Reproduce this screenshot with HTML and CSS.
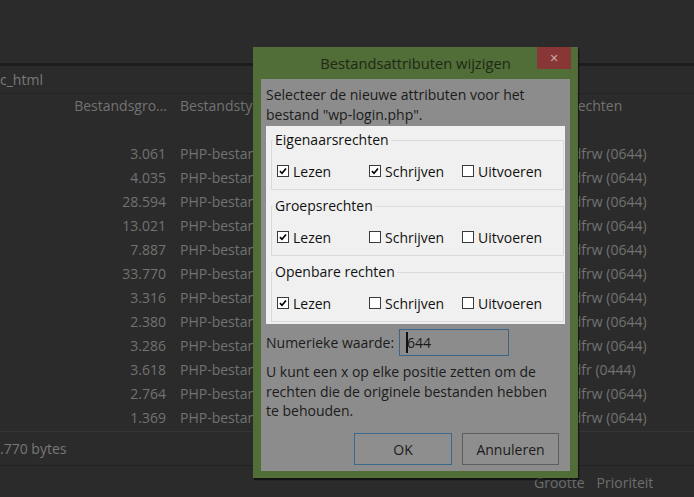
FILE: index.html
```html
<!DOCTYPE html>
<html lang="nl">
<head>
<meta charset="utf-8">
<title>Bestandsattributen wijzigen</title>
<link rel="stylesheet" href="styles.css">
</head>
<body>
<div class="app">
  <div class="toolbar"></div>
  <div class="sep"></div>
  <div class="path">c_html</div>
  <div class="list">
    <div class="row head"><span class="c-size">Bestandsgro…</span><span class="c-type">Bestandstype</span><span class="c-rights">Rechten</span></div>
    <div class="row"><span class="c-size"></span><span class="c-type"></span><span class="c-rights"></span></div>
    <div class="row"><span class="c-size">3.061</span><span class="c-type">PHP-bestand</span><span class="c-rights">adfrw (0644)</span></div>
    <div class="row"><span class="c-size">4.035</span><span class="c-type">PHP-bestand</span><span class="c-rights">adfrw (0644)</span></div>
    <div class="row"><span class="c-size">28.594</span><span class="c-type">PHP-bestand</span><span class="c-rights">adfrw (0644)</span></div>
    <div class="row"><span class="c-size">13.021</span><span class="c-type">PHP-bestand</span><span class="c-rights">adfrw (0644)</span></div>
    <div class="row"><span class="c-size">7.887</span><span class="c-type">PHP-bestand</span><span class="c-rights">adfrw (0644)</span></div>
    <div class="row"><span class="c-size">33.770</span><span class="c-type">PHP-bestand</span><span class="c-rights">adfrw (0644)</span></div>
    <div class="row"><span class="c-size">3.316</span><span class="c-type">PHP-bestand</span><span class="c-rights">adfrw (0644)</span></div>
    <div class="row"><span class="c-size">2.380</span><span class="c-type">PHP-bestand</span><span class="c-rights">adfrw (0644)</span></div>
    <div class="row"><span class="c-size">3.286</span><span class="c-type">PHP-bestand</span><span class="c-rights">adfrw (0644)</span></div>
    <div class="row"><span class="c-size">3.618</span><span class="c-type">PHP-bestand</span><span class="c-rights">adfr (0444)</span></div>
    <div class="row"><span class="c-size">2.764</span><span class="c-type">PHP-bestand</span><span class="c-rights">adfrw (0644)</span></div>
    <div class="row"><span class="c-size">1.369</span><span class="c-type">PHP-bestand</span><span class="c-rights">adfrw (0644)</span></div>
  </div>
  <div class="total">.770 bytes</div>
  <div class="queue-head"><span class="q-size">Grootte</span><span class="q-prio">Prioriteit</span></div>
</div>

<div class="dialog">
  <div class="titlebar">
    <span></span>
    <span class="title">Bestandsattributen wijzigen</span>
    <span class="close-wrap"><span class="close">&#x2715;</span></span>
  </div>
  <div class="body">
    <p class="intro">Selecteer de nieuwe attributen voor het bestand "wp-login.php".</p>
    <div class="groups">
      <div class="group">
        <div class="legend">Eigenaarsrechten</div>
        <div class="checks">
          <label class="check"><span class="box on"><svg viewBox="0 0 12 12"><path d="M2.3 6.2 L4.8 8.7 L9.6 2.9"/></svg></span>Lezen</label>
          <label class="check"><span class="box on"><svg viewBox="0 0 12 12"><path d="M2.3 6.2 L4.8 8.7 L9.6 2.9"/></svg></span>Schrijven</label>
          <label class="check"><span class="box"></span>Uitvoeren</label>
        </div>
      </div>
      <div class="group">
        <div class="legend">Groepsrechten</div>
        <div class="checks">
          <label class="check"><span class="box on"><svg viewBox="0 0 12 12"><path d="M2.3 6.2 L4.8 8.7 L9.6 2.9"/></svg></span>Lezen</label>
          <label class="check"><span class="box"></span>Schrijven</label>
          <label class="check"><span class="box"></span>Uitvoeren</label>
        </div>
      </div>
      <div class="group">
        <div class="legend">Openbare rechten</div>
        <div class="checks">
          <label class="check"><span class="box on"><svg viewBox="0 0 12 12"><path d="M2.3 6.2 L4.8 8.7 L9.6 2.9"/></svg></span>Lezen</label>
          <label class="check"><span class="box"></span>Schrijven</label>
          <label class="check"><span class="box"></span>Uitvoeren</label>
        </div>
      </div>
    </div>
    <div class="numeric">
      <span class="num-label">Numerieke waarde:</span>
      <span class="num-input"><span class="caret"></span>644</span>
    </div>
    <p class="help">U kunt een x op elke positie zetten om de rechten die de originele bestanden hebben te behouden.</p>
    <div class="buttons">
      <span class="btn btn-ok">OK</span>
      <span class="btn btn-cancel">Annuleren</span>
    </div>
  </div>
</div>
</body>
</html>
```

FILE: styles.css
```css
html, body {
  margin: 0;
  padding: 0;
}
body {
  width: 694px;
  height: 497px;
  overflow: hidden;
  background: #2b2b2b;
  font-family: "Open Sans", "Noto Sans", sans-serif;
  font-size: 14px;
  position: relative;
}

/* ---------- background application (dimmed) ---------- */
.app {
  color: #727272;
}
.toolbar {
  height: 63px;
  background: #2b2b2b;
}
.sep {
  height: 3px;
  background: #1c1c1c;
}
.path {
  height: 27px;
  line-height: 27px;
  color: #7a7a7a;
  border-bottom: 1px solid #232323;
  white-space: nowrap;
}
.list {
  border-bottom: 1px solid #353535;
}
.row {
  display: grid;
  grid-template-columns: 170px 395px 1fr;
  height: 24px;
  line-height: 22px;
  white-space: nowrap;
}
.row.head {
  height: 25px;
  line-height: 23px;
}
.c-size {
  text-align: right;
  padding-right: 4px;
}
.head .c-size {
  padding-right: 3px;
}
.c-type {
  padding-left: 10px;
  overflow: hidden;
}
.head .c-rights {
  padding-left: 4px;
}
.total {
  height: 33px;
  line-height: 33px;
  color: #787878;
  border-bottom: 1px solid #222;
  white-space: nowrap;
}
.queue-head {
  height: 30px;
  line-height: 33px;
  display: flex;
  padding-left: 534px;
  gap: 12px;
  color: #6e6e6e;
}

/* ---------- dialog window ---------- */
.dialog {
  position: absolute;
  left: 253px;
  top: 47px;
  width: 325px;
  height: 431px;
  background: #516d38;
  box-shadow: 1px 2px 1px rgba(0, 0, 0, 0.55);
  display: flex;
  flex-direction: column;
}
.titlebar {
  height: 32px;
  display: grid;
  grid-template-columns: 1fr auto 1fr;
  padding-right: 7px;
}
.title {
  line-height: 32px;
  font-size: 14.7px;
  color: #1e2915;
  padding-left: 7px;
}
.close-wrap {
  display: flex;
  justify-content: flex-end;
  align-items: flex-start;
}
.close {
  width: 34px;
  height: 22px;
  background: #883636;
  color: #c9a9a9;
  font-size: 11px;
  font-weight: bold;
  display: flex;
  align-items: center;
  justify-content: center;
  font-family: "DejaVu Sans", sans-serif;
}
.body {
  margin: 0 8px;
  height: 392px;
  box-sizing: border-box;
  background: #8c8c8c;
  padding: 6px 5px 6px 5px;
  color: #1b1b1b;
  display: flex;
  flex-direction: column;
}
.intro {
  margin: 0;
  line-height: 20px;
}
.groups {
  margin-top: 1px;
  background: #f0f0f0;
  padding: 14px 1px 2px 5px;
  color: #111;
}
.group {
  border: 1px solid #dadada;
  height: 50px;
  box-sizing: border-box;
  padding: 0 0 0 5px;
}
.group + .group {
  margin-top: 16px;
}
.legend {
  width: fit-content;
  margin-top: -10px;
  margin-left: -4px;
  padding: 0 2px;
  line-height: 18px;
  background: #f0f0f0;
}
.checks {
  margin-top: 11px;
  height: 22px;
  display: grid;
  grid-template-columns: 92px 93px auto;
  align-items: center;
}
.check {
  display: flex;
  align-items: center;
  gap: 4px;
}
.box {
  width: 12px;
  height: 12px;
  box-sizing: border-box;
  border: 1px solid #3a3a3a;
  background: #fff;
  display: inline-flex;
}
.box svg {
  width: 10px;
  height: 10px;
}
.box path {
  fill: none;
  stroke: #000;
  stroke-width: 2;
}
.numeric {
  margin-top: 5px;
  display: flex;
  align-items: center;
  height: 27px;
}
.num-label {
  width: 133px;
  flex: none;
}
.num-input {
  width: 110px;
  height: 27px;
  box-sizing: border-box;
  border: 1px solid #3d6686;
  display: flex;
  align-items: center;
  padding-left: 6px;
}
.caret {
  width: 2px;
  height: 21px;
  background: #111;
  margin-right: -1px;
}
.help {
  margin: 6px 0 0;
  width: 282px;
  line-height: 19.5px;
}
.buttons {
  margin-top: auto;
  display: flex;
  justify-content: flex-end;
  gap: 10px;
  padding-right: 6px;
}
.btn {
  height: 32px;
  box-sizing: border-box;
  display: flex;
  align-items: center;
  justify-content: center;
  background: #8e8e8e;
}
.btn-ok {
  width: 98px;
  border: 1px solid #3b6a8c;
}
.btn-cancel {
  width: 97px;
  border: 1px solid #5d5d5d;
}
```
